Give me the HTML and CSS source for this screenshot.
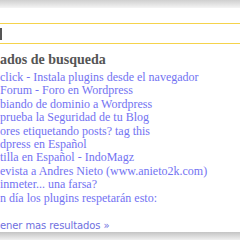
FILE: index.html
```html
<!DOCTYPE html>
<html lang="es">
<head>
  <meta charset="UTF-8" />
  <title>Busqueda</title>
  <link rel="stylesheet" href="styles.css">
</head>
<body>
  <div class="top-shade"></div>
  <div class="search-box">
    <span class="caret"></span>
  </div>
  <div class="results">
    <h3 class="results-title">ados de busqueda</h3>
    <ul class="result-list">
      <li><a href="#">click - Instala plugins desde el navegador</a></li>
      <li><a href="#">Forum - Foro en Wordpress</a></li>
      <li><a href="#">biando de dominio a Wordpress</a></li>
      <li><a href="#">prueba la Seguridad de tu Blog</a></li>
      <li><a href="#">ores etiquetando posts? tag this</a></li>
      <li><a href="#">dpress en Español</a></li>
      <li><a href="#">tilla en Español - IndoMagz</a></li>
      <li><a href="#">evista a Andres Nieto (www.anieto2k.com)</a></li>
      <li><a href="#">inmeter... una farsa?</a></li>
      <li><a href="#">n día los plugins respetarán esto:</a></li>
    </ul>
    <p class="more"><a href="#">ener mas resultados »</a></p>
  </div>
  <div class="bottom-shade"></div>
</body>
</html>
```

FILE: styles.css
```css
html, body { margin: 0; padding: 0; background: #fff; }
body { width: 240px; height: 240px; overflow: hidden; position: relative; font-family: "Liberation Serif", serif; }
.top-shade { height: 8px; background: linear-gradient(#cfcfcf, #f4f4f4); }
.search-box { margin-top: 15px; height: 19px; border-top: 1px solid #f5d34c; border-bottom: 1px solid #f5d34c; display: flex; align-items: center; }
.caret { width: 2px; height: 12px; background: #555; }
.results { padding-top: 8px; }
.results-title { margin: 0 0 3px 0; font-size: 14px; font-weight: bold; color: #555; line-height: 16px; }
.result-list { list-style: none; margin: 0; padding: 0; }
.result-list li { font-size: 12px; line-height: 13.4px; }
.result-list a { color: #7272f2; text-decoration: none; }
.more { margin: 14px 0 0 0; font-family: "DejaVu Sans", sans-serif; font-size: 10px; line-height: 13px; letter-spacing: -0.1px; }
.more a { color: #6f6fe0; text-decoration: none; }
.bottom-shade { position: absolute; left: 0; right: 0; bottom: 0; height: 8px; background: linear-gradient(#c4c4c4, #f0f0f0); }
```
